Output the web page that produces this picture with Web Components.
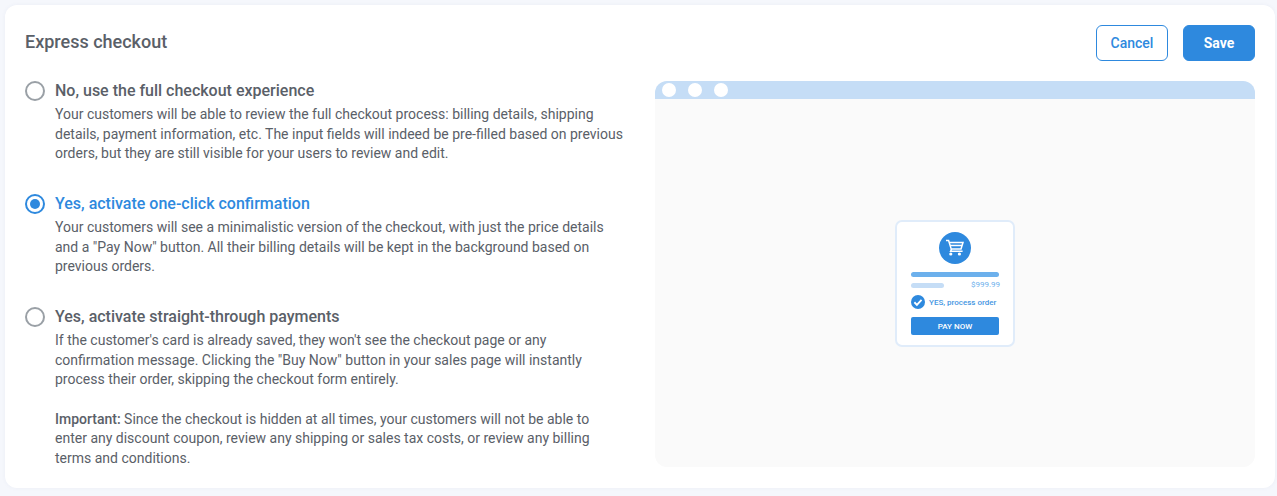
<!DOCTYPE html>
<html>
<head>
<meta charset="utf-8">
<title>Express checkout</title>
<style>
  html, body {
    margin: 0;
    height: 100%;
    background: #f5f7fc;
    font-family: Roboto, "Liberation Sans", sans-serif;
  }
  body {
    padding: 5px 2px 8px 5px;
    box-sizing: border-box;
  }
</style>
</head>
<body>
<express-card>
  <span slot="title">Express checkout</span>
  <app-button slot="actions" variant="outline">Cancel</app-button>
  <app-button slot="actions" variant="solid">Save</app-button>

  <radio-option title-text="No, use the full checkout experience">
    <p>Your customers will be able to review the full checkout process: billing details, shipping details, payment information, etc. The input fields will indeed be pre-filled based on previous orders, but they are still visible for your users to review and edit.</p>
  </radio-option>
  <radio-option checked title-text="Yes, activate one-click confirmation">
    <p>Your customers will see a minimalistic version of the checkout, with just the price details and a "Pay Now" button. All their billing details will be kept in the background based on previous orders.</p>
  </radio-option>
  <radio-option title-text="Yes, activate straight-through payments">
    <p>If the customer's card is already saved, they won't see the checkout page or any confirmation message. Clicking the "Buy Now" button in your sales page will instantly process their order, skipping the checkout form entirely.</p>
    <p><b>Important:</b> Since the checkout is hidden at all times, your customers will not be able to enter any discount coupon, review any shipping or sales tax costs, or review any billing terms and conditions.</p>
  </radio-option>

  <browser-preview slot="preview"></browser-preview>
</express-card>

<script>
// Outer white card: header row, options on the left, preview on the right
class ExpressCard extends HTMLElement {
  constructor() {
    super();
    this.attachShadow({ mode: 'open' });
    this.shadowRoot.innerHTML = `
      <style>
        :host {
          display: block;
          background: #fff;
          border-radius: 12px;
          height: 483px;
          padding: 20px;
          box-sizing: border-box;
          box-shadow: 0 0 4px rgba(60, 80, 140, 0.05);
        }
        .head {
          display: flex;
          justify-content: space-between;
          align-items: flex-start;
          height: 56px;
        }
        .title {
          font-size: 18px;
          font-weight: 500;
          line-height: 34px;
          color: #5a6068;
        }
        .actions {
          display: flex;
          gap: 15px;
        }
        .body {
          display: grid;
          grid-template-columns: 599px 600px;
          gap: 31px;
        }
        .options {
          display: flex;
          flex-direction: column;
          gap: 29.9px;
        }
      </style>
      <div class="head">
        <div class="title"><slot name="title"></slot></div>
        <div class="actions"><slot name="actions"></slot></div>
      </div>
      <div class="body">
        <div class="options"><slot></slot></div>
        <slot name="preview"></slot>
      </div>
    `;
  }
}

class AppButton extends HTMLElement {
  constructor() {
    super();
    this.attachShadow({ mode: 'open' });
    this.shadowRoot.innerHTML = `
      <style>
        :host {
          display: flex;
          align-items: center;
          justify-content: center;
          width: 72px;
          height: 36px;
          box-sizing: border-box;
          border-radius: 6px;
          border: 1px solid #2e89de;
          font-size: 14px;
          font-weight: 500;
          cursor: pointer;
        }
        :host([variant="outline"]) {
          background: #fff;
          color: #2e89de;
        }
        :host([variant="solid"]) {
          background: #2e89de;
          color: #fff;
          font-weight: 700;
        }
      </style>
      <slot></slot>
    `;
  }
}

class RadioOption extends HTMLElement {
  constructor() {
    super();
    this.attachShadow({ mode: 'open' });
  }

  connectedCallback() {
    this.shadowRoot.innerHTML = `
      <style>
        :host {
          display: grid;
          grid-template-columns: 20px 1fr;
          column-gap: 10px;
          color: #5a6068;
        }
        .dot {
          width: 20px;
          height: 20px;
          box-sizing: border-box;
          border: 2px solid #9aa0a6;
          border-radius: 50%;
          display: flex;
          align-items: center;
          justify-content: center;
        }
        .name {
          font-size: 16px;
          font-weight: 500;
          line-height: 20px;
          margin-bottom: 4.3px;
        }
        .desc {
          font-size: 14px;
          line-height: 1.4;
        }
        ::slotted(p) {
          margin: 0 0 1.4em;
        }
        ::slotted(p:last-child) {
          margin-bottom: 0;
        }
        :host([checked]) .dot {
          border-color: #2e89de;
        }
        :host([checked]) .dot::after {
          content: "";
          width: 10px;
          height: 10px;
          border-radius: 50%;
          background: #2e89de;
        }
        :host([checked]) .name {
          color: #2e89de;
        }
      </style>
      <div class="dot"></div>
      <div>
        <div class="name">${this.getAttribute('title-text')}</div>
        <div class="desc"><slot></slot></div>
      </div>
    `;
    // bold weight lives on light DOM content, so set it from here
    this.querySelectorAll('b').forEach(b => { b.style.fontWeight = '500'; });
  }
}

// Browser window mockup with the mini checkout card centered in it
class BrowserPreview extends HTMLElement {
  constructor() {
    super();
    this.attachShadow({ mode: 'open' });
    this.shadowRoot.innerHTML = `
      <style>
        :host {
          display: flex;
          flex-direction: column;
          height: 386px;
          border-radius: 12px;
          overflow: hidden;
          background: #fafafa;
        }
        .bar {
          height: 18px;
          background: #c5ddf6;
          display: flex;
          align-items: center;
          gap: 12px;
          padding-left: 7px;
          flex: none;
        }
        .bar i {
          width: 14px;
          height: 14px;
          border-radius: 50%;
          background: #fff;
        }
        .stage {
          flex: 1;
          display: flex;
          align-items: center;
          justify-content: center;
        }
      </style>
      <div class="bar"><i></i><i></i><i></i></div>
      <div class="stage"><mini-checkout></mini-checkout></div>
    `;
  }
}

class MiniCheckout extends HTMLElement {
  constructor() {
    super();
    this.attachShadow({ mode: 'open' });
    this.shadowRoot.innerHTML = `
      <style>
        :host {
          display: flex;
          flex-direction: column;
          align-items: center;
          width: 120px;
          height: 127px;
          box-sizing: border-box;
          padding: 10px 14px 0;
          background: #fff;
          border: 2px solid #e0ecfa;
          border-radius: 7px;
          margin-top: 1px;
        }
        .cart {
          width: 32px;
          height: 32px;
          border-radius: 50%;
          background: #2e89de;
          margin-bottom: 8px;
        }
        .cart svg {
          display: block;
        }
        .line {
          width: 88px;
          height: 5px;
          border-radius: 3px;
          background: #6cb0ec;
        }
        .price {
          width: 89px;
          margin: 3px -1px 0 0;
          display: flex;
          justify-content: space-between;
          align-items: center;
          font-size: 8px;
          line-height: 10px;
          color: #6cb0ec;
        }
        .price i {
          width: 33px;
          height: 5px;
          border-radius: 3px;
          background: #c5ddf6;
        }
        .yes {
          width: 88px;
          display: flex;
          align-items: center;
          gap: 4px;
          margin-top: 5px;
          font-size: 8px;
          font-weight: 500;
          color: #4596e2;
          white-space: nowrap;
        }
        .pay {
          width: 88px;
          height: 18px;
          margin-top: 8px;
          border-radius: 2px;
          background: #2e89de;
          color: #fff;
          font-size: 8px;
          font-weight: 500;
          display: flex;
          align-items: center;
          justify-content: center;
        }
      </style>
      <div class="cart">
        <svg width="32" height="32" viewBox="0 0 32 32" fill="none" stroke="#fff" stroke-width="1.5">
          <path d="M7 8.6h2.6l2.8 9"/>
          <path d="M10 10.4h14l-2 6.6H12.2"/>
          <path d="M11 13.6h12"/>
          <path d="M12.6 17l-1 2.2h12"/>
          <circle cx="11.8" cy="22" r="1.6" fill="#fff" stroke="none"/>
          <circle cx="20.4" cy="22" r="1.6" fill="#fff" stroke="none"/>
        </svg>
      </div>
      <div class="line"></div>
      <div class="price"><i></i><span>$999.99</span></div>
      <div class="yes">
        <svg width="14" height="14" viewBox="0 0 15 15"><circle cx="7.5" cy="7.5" r="7.5" fill="#2e89de"/><path d="M3.6 7.8l2.7 2.7 5-5.4" fill="none" stroke="#fff" stroke-width="2"/></svg>
        <span>YES, process order</span>
      </div>
      <div class="pay">PAY NOW</div>
    `;
  }
}

customElements.define('express-card', ExpressCard);
customElements.define('app-button', AppButton);
customElements.define('radio-option', RadioOption);
customElements.define('browser-preview', BrowserPreview);
customElements.define('mini-checkout', MiniCheckout);
</script>
</body>
</html>
